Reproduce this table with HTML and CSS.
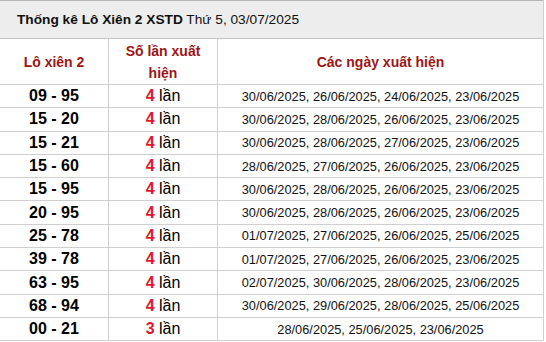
FILE: index.html
```html
<!DOCTYPE html>
<html lang="vi">
<head>
<meta charset="utf-8">
<link rel="stylesheet" href="styles.css">
</head>
<body>
<table class="stats">
  <colgroup>
    <col class="c1"><col class="c2"><col class="c3">
  </colgroup>
  <thead>
    <tr class="title-row">
      <th colspan="3" class="title"><b>Thống kê Lô Xiên 2 XSTD</b> Thứ 5, 03/07/2025</th>
    </tr>
    <tr class="head-row">
      <th>Lô xiên 2</th>
      <th>Số lần xuất hiện</th>
      <th>Các ngày xuất hiện</th>
    </tr>
  </thead>
  <tbody>
    <tr><td class="pair">09 - 95</td><td class="count"><b>4</b> lần</td><td class="dates">30/06/2025, 26/06/2025, 24/06/2025, 23/06/2025</td></tr>
    <tr><td class="pair">15 - 20</td><td class="count"><b>4</b> lần</td><td class="dates">30/06/2025, 28/06/2025, 26/06/2025, 23/06/2025</td></tr>
    <tr><td class="pair">15 - 21</td><td class="count"><b>4</b> lần</td><td class="dates">30/06/2025, 28/06/2025, 27/06/2025, 23/06/2025</td></tr>
    <tr><td class="pair">15 - 60</td><td class="count"><b>4</b> lần</td><td class="dates">28/06/2025, 27/06/2025, 26/06/2025, 23/06/2025</td></tr>
    <tr><td class="pair">15 - 95</td><td class="count"><b>4</b> lần</td><td class="dates">30/06/2025, 28/06/2025, 26/06/2025, 23/06/2025</td></tr>
    <tr><td class="pair">20 - 95</td><td class="count"><b>4</b> lần</td><td class="dates">30/06/2025, 28/06/2025, 26/06/2025, 23/06/2025</td></tr>
    <tr><td class="pair">25 - 78</td><td class="count"><b>4</b> lần</td><td class="dates">01/07/2025, 27/06/2025, 26/06/2025, 25/06/2025</td></tr>
    <tr><td class="pair">39 - 78</td><td class="count"><b>4</b> lần</td><td class="dates">01/07/2025, 27/06/2025, 26/06/2025, 23/06/2025</td></tr>
    <tr><td class="pair">63 - 95</td><td class="count"><b>4</b> lần</td><td class="dates">02/07/2025, 30/06/2025, 28/06/2025, 23/06/2025</td></tr>
    <tr><td class="pair">68 - 94</td><td class="count"><b>4</b> lần</td><td class="dates">30/06/2025, 29/06/2025, 28/06/2025, 25/06/2025</td></tr>
    <tr><td class="pair">00 - 21</td><td class="count"><b>3</b> lần</td><td class="dates">28/06/2025, 25/06/2025, 23/06/2025</td></tr>
  </tbody>
</table>
</body>
</html>
```
FILE: styles.css
```css
html, body {
  margin: 0;
  padding: 0;
  background: #ffffff;
}
body {
  font-family: "Liberation Sans", Arial, sans-serif;
  color: #000;
}
.stats {
  border-collapse: collapse;
  width: 545px;
  margin-left: -1px;
  table-layout: fixed;
  border-right: 1px solid #777;
}
.c1 { width: 109px; }
.c2 { width: 109px; }
.c3 { width: auto; }
.stats th, .stats td {
  border: 1px solid #cfcfcf;
  padding: 0 2px;
  text-align: center;
}
.stats .title-row th {
  border-top: 1px solid #b5b5b5;
  border-bottom: 1px solid #c4c4c4;
}
.title {
  background: #eeeded;
  height: 37px;
  text-align: left !important;
  padding-left: 17px !important;
  font-size: 13.7px;
  font-weight: normal;
  color: #111;
}
.title b { font-weight: bold; }
.head-row th {
  height: 45px;
  font-size: 14px;
  font-weight: bold;
  color: #9e1515;
  line-height: 22px;
  padding: 0 4px;
}
.stats tbody td {
  height: 22.3px;
  padding-top: 0;
  padding-bottom: 0;
}
.pair {
  font-size: 16px;
  font-weight: bold;
}
.count {
  font-size: 16px;
}
.count b {
  color: #e2162c;
}
.dates {
  font-size: 12.8px;
  color: #111;
}
```
